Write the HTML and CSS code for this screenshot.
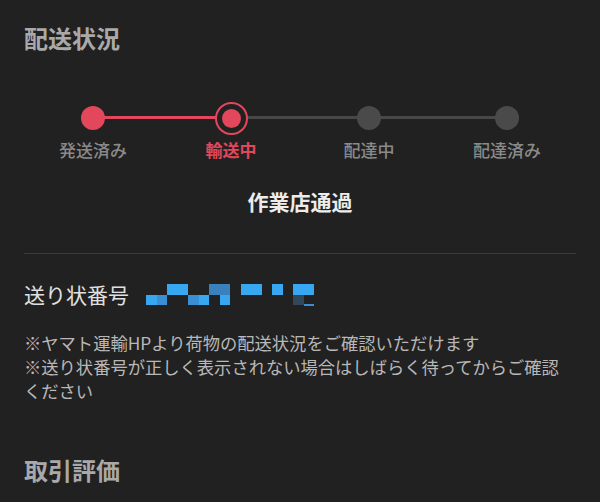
FILE: index.html
```html
<!DOCTYPE html>
<html lang="ja">
<head>
<meta charset="utf-8">
<link rel="stylesheet" href="styles.css">
</head>
<body>
<main class="page">
  <h2 class="section-title">配送状況</h2>

  <div class="stepper">
    <div class="step done first">
      <div class="track"><span class="dot"></span></div>
      <span class="label">発送済み</span>
    </div>
    <div class="step current">
      <div class="track"><span class="ring"><span class="dot"></span></span></div>
      <span class="label">輸送中</span>
    </div>
    <div class="step">
      <div class="track"><span class="dot"></span></div>
      <span class="label">配達中</span>
    </div>
    <div class="step last">
      <div class="track"><span class="dot"></span></div>
      <span class="label">配達済み</span>
    </div>
  </div>

  <p class="status">作業店通過</p>

  <hr class="divider">

  <div class="tracking">
    <span class="tracking-label">送り状番号</span>
    <span class="mosaic">
      <i></i><i></i><i class="b1"></i><i class="b1"></i><i></i><i></i><i class="b3"></i><i class="b3"></i><i></i><i class="b1"></i><i class="b1"></i><i></i><i class="b1"></i><i></i><i class="b1"></i><i class="b1"></i>
      <i class="b1"></i><i class="b2"></i><i></i><i></i><i class="b2"></i><i class="b1"></i><i></i><i class="b1"></i><i></i><i></i><i></i><i></i><i></i><i></i><i class="b4"></i><i class="tail"></i>
    </span>
  </div>

  <div class="notes">
    <p>※ヤマト運輸HPより荷物の配送状況をご確認いただけます</p>
    <p>※送り状番号が正しく表示されない場合はしばらく待ってからご確認ください</p>
  </div>

  <h2 class="section-title second">取引評価</h2>
</main>
</body>
</html>
```

FILE: styles.css
```css
* { box-sizing: border-box; }
html, body {
  margin: 0;
  padding: 0;
  background: #212121;
  height: 100%;
  overflow: hidden;
}
body {
  font-family: "Noto Sans CJK JP", "Noto Sans", sans-serif;
  color: #dcdcdc;
}
.page {
  padding: 0 24px;
}
.section-title {
  margin: 21px 0 0;
  font-size: 24px;
  line-height: 34px;
  font-weight: 700;
  color: #a9a9a9;
}
.section-title.second {
  margin-top: 50px;
}

/* stepper */
.stepper {
  display: grid;
  grid-template-columns: repeat(4, 1fr);
  margin-top: 45px;
}
.step {
  display: flex;
  flex-direction: column;
  align-items: center;
}
.track {
  position: relative;
  width: 100%;
  height: 36px;
  display: flex;
  align-items: center;
  justify-content: center;
}
.track::before,
.track::after {
  content: "";
  position: absolute;
  top: 16px;
  height: 3px;
  width: 50%;
  background: #474747;
}
.track::before { left: 0; }
.track::after { right: 0; }
.first .track::before,
.last .track::after { display: none; }
.done .track::after,
.current .track::before { background: #e2475b; }

.dot {
  position: relative;
  z-index: 1;
  width: 24px;
  height: 24px;
  border-radius: 50%;
  background: #4a4a4a;
}
.done .dot { background: #e2475b; }
.ring {
  position: relative;
  z-index: 1;
  width: 33px;
  height: 33px;
  border-radius: 50%;
  border: 2.5px solid #e2475b;
  background: #212121;
  display: flex;
  align-items: center;
  justify-content: center;
}
.current .dot {
  width: 19px;
  height: 19px;
  background: #e2475b;
}
.label {
  margin-top: 2px;
  font-size: 17px;
  line-height: 24px;
  color: #8a8a8a;
  font-weight: 500;
}
.current .label {
  color: #e2475b;
  font-weight: 700;
}

.status {
  margin: 24px 0 0;
  text-align: center;
  font-size: 21px;
  line-height: 30px;
  font-weight: 700;
  color: #ececec;
}

.divider {
  margin: 37px 0 0;
  border: 0;
  height: 1px;
  background: #3a3a3a;
}

.tracking {
  margin-top: 25px;
  display: flex;
  align-items: center;
  height: 30px;
}
.tracking-label {
  font-size: 21px;
  line-height: 30px;
  color: #e0e0e0;
}
.mosaic {
  margin-left: 17px;
  display: grid;
  grid-template-columns: repeat(16, 10.5px);
  grid-template-rows: repeat(2, 10.5px);
  margin-top: 1px;
}
.mosaic i { display: block; }
.mosaic .b1 { background: #38a7f2; }
.mosaic .b2 { background: #3a8fd4; }
.mosaic .b3 { background: #3a80bd; }
.mosaic .b4 { background: #32475a; }
.mosaic .tail {
  border-bottom: 2px solid #3a8fd4;
  margin-bottom: -1px;
}

.notes {
  margin-top: 22px;
  font-size: 17.3px;
  line-height: 24px;
  color: #b8b8b8;
}
.notes p { margin: 0; }
```
